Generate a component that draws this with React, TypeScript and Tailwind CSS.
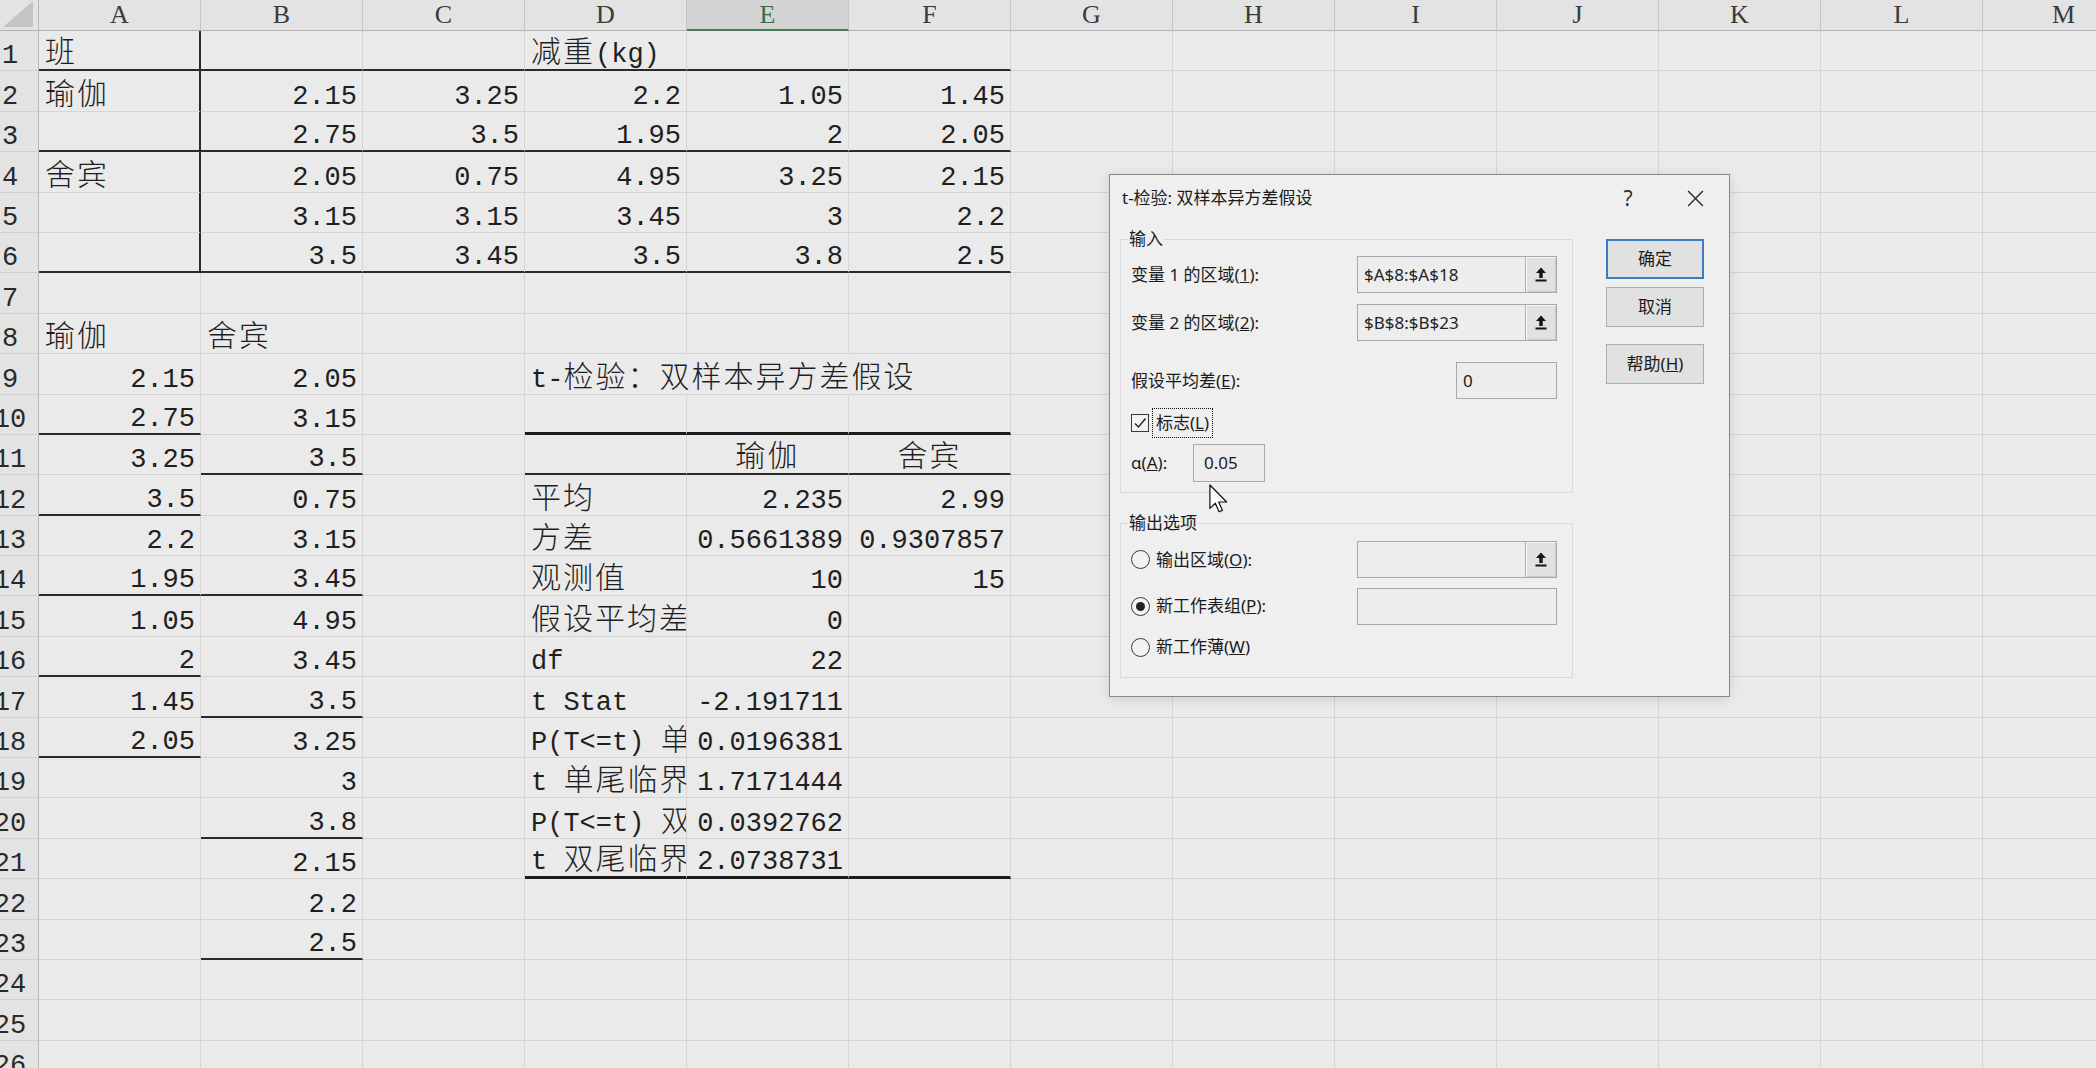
import React from 'react';

type Align = 'l' | 'r' | 'c';
type CellDef = { v: string; a: Align; over?: boolean };

const COLS = ['A', 'B', 'C', 'D', 'E', 'F', 'G', 'H', 'I', 'J', 'K', 'L', 'M'];
const ROW_COUNT = 26;

const data: Record<string, CellDef> = {};
function put(ref: string, v: string | number, a?: Align) {
  if (v === '') return;
  data[ref] = { v: String(v), a: a ?? (typeof v === 'number' ? 'r' : 'l') };
}

// table 1: raw data
const T1: (string | number)[][] = [
  ['班', '', '', '减重(kg)', '', ''],
  ['瑜伽', 2.15, 3.25, 2.2, 1.05, 1.45],
  ['', 2.75, 3.5, 1.95, 2, 2.05],
  ['舍宾', 2.05, 0.75, 4.95, 3.25, 2.15],
  ['', 3.15, 3.15, 3.45, 3, 2.2],
  ['', 3.5, 3.45, 3.5, 3.8, 2.5],
];
T1.forEach((row, i) => row.forEach((v, j) => put(COLS[j] + (i + 1), v)));

// table 2: two columns
put('A8', '瑜伽');
put('B8', '舍宾');
[2.15, 2.75, 3.25, 3.5, 2.2, 1.95, 1.05, 2, 1.45, 2.05].forEach((v, i) => put('A' + (9 + i), v));
[2.05, 3.15, 3.5, 0.75, 3.15, 3.45, 4.95, 3.45, 3.5, 3.25, 3, 3.8, 2.15, 2.2, 2.5].forEach((v, i) =>
  put('B' + (9 + i), v)
);

// table 3: t-test output
data['D9'] = { v: 't-检验：双样本异方差假设', a: 'l', over: true };
put('E11', '瑜伽', 'c');
put('F11', '舍宾', 'c');
const T3: [string, string | number, string | number][] = [
  ['平均', 2.235, 2.99],
  ['方差', 0.5661389, 0.9307857],
  ['观测值', 10, 15],
  ['假设平均差', 0, ''],
  ['df', 22, ''],
  ['t Stat', -2.191711, ''],
  ['P(T<=t) 单尾', 0.0196381, ''],
  ['t 单尾临界', 1.7171444, ''],
  ['P(T<=t) 双尾', 0.0392762, ''],
  ['t 双尾临界', 2.0738731, ''],
];
T3.forEach(([l, e, f], i) => {
  put('D' + (12 + i), l);
  put('E' + (12 + i), e);
  put('F' + (12 + i), f);
});

const thickBottom = new Set(['D10', 'E10', 'F10', 'D21', 'E21', 'F21']);
const lineBottom = new Set<string>(['D11', 'E11', 'F11', 'A10', 'A12', 'A14', 'A16', 'A18', 'B11', 'B14', 'B17', 'B20', 'B23']);
['A', 'B', 'C', 'D', 'E', 'F'].forEach((c) => ['1', '3', '6'].forEach((r) => lineBottom.add(c + r)));
const lineRight = new Set(['A1', 'A2', 'A3', 'A4', 'A5', 'A6']);
const noGridRight = new Set(['D9', 'E9']);

const CJK = /([\u3000-\u303f\u4e00-\u9fff\uff00-\uffef]+)/;

function SheetText({ s }: { s: string }) {
  return (
    <span className="whitespace-pre leading-none font-['Liberation_Mono',monospace] text-[27px] text-[#1f1f1f]">
      {s.split(CJK).map((p, i) =>
        !p ? null : CJK.test(p) ? (
          <span key={i} className="font-['Noto_Sans_CJK_SC',sans-serif] font-light text-[30px] tracking-[2px]">
            {p}
          </span>
        ) : (
          <span key={i}>{p}</span>
        )
      )}
    </span>
  );
}

function Cell({ id }: { id: string }) {
  const d = data[id];
  const bottom = thickBottom.has(id)
    ? 'border-b-[3px] border-b-[#1c1c1c]'
    : lineBottom.has(id)
      ? 'border-b-2 border-b-[#2a2a2a]'
      : 'border-b border-b-[#d4d4d4]';
  const right = lineRight.has(id)
    ? 'border-r-2 border-r-[#2a2a2a]'
    : noGridRight.has(id)
      ? 'border-r border-r-transparent'
      : 'border-r border-r-[#d4d4d4]';
  const align = !d ? '' : d.a === 'r' ? 'justify-end pr-[5px]' : d.a === 'c' ? 'justify-center' : 'justify-start pl-[6px]';
  return (
    <div
      className={`flex items-end min-w-0 ${d?.over ? 'relative z-10 overflow-visible' : 'overflow-hidden'} ${bottom} ${right} ${align}`}
    >
      {d && <SheetText s={d.v} />}
    </div>
  );
}

function ColHead({ c }: { c: string }) {
  const sel = c === 'E';
  return (
    <div
      className={`flex items-center justify-center border-r border-r-[#c6c6c6] font-['Liberation_Serif',serif] text-[26px] leading-none ${
        sel ? 'bg-[#d4d4d4] text-[#3b6b4a] border-b-2 border-b-[#4a7c59]' : 'bg-[#e3e3e3] text-[#3a3a3a] border-b border-b-[#b2b2b2]'
      }`}
    >
      {c}
    </div>
  );
}

function RowHead({ r }: { r: number }) {
  return (
    <div className="flex items-end overflow-hidden bg-[#e3e3e3] border-r border-r-[#b8b8b8] border-b border-b-[#cfcfcf]">
      <div className="w-[60px] -ml-[20px] shrink-0 flex justify-center">
        <span className="leading-none font-['Liberation_Mono',monospace] text-[27px] text-[#2a2a2a]">{r}</span>
      </div>
    </div>
  );
}

function Corner() {
  return (
    <div className="bg-[#e3e3e3] border-r border-r-[#b8b8b8] border-b border-b-[#b2b2b2] overflow-hidden">
      <svg width="38" height="30" viewBox="0 0 38 30">
        <path d="M3 27 L33 1 L33 27 Z" fill="#c4c4c4" />
      </svg>
    </div>
  );
}

function Sheet() {
  return (
    <div className="grid w-[2145px] grid-cols-[39px_repeat(13,162px)] grid-rows-[31px_repeat(26,40.4px)]">
      <Corner />
      {COLS.map((c) => (
        <ColHead key={c} c={c} />
      ))}
      {Array.from({ length: ROW_COUNT }, (_, i) => i + 1).map((r) => (
        <React.Fragment key={r}>
          <RowHead r={r} />
          {COLS.map((c) => (
            <Cell key={c + r} id={c + r} />
          ))}
        </React.Fragment>
      ))}
    </div>
  );
}

function UpArrow() {
  return (
    <svg width="14" height="17" viewBox="0 0 14 17">
      <path d="M7 1.5 L2 7 H5.3 V12 H8.7 V7 H12 Z" fill="#151515" />
      <rect x="1.5" y="13.5" width="11" height="2" fill="#151515" />
    </svg>
  );
}

function RefBox({ value, arrow = true }: { value?: string; arrow?: boolean }) {
  return (
    <div className="flex h-[37px] w-[200px] border border-[#a9a9a9] bg-[#ededed]">
      <div className="flex-1 flex items-center pl-[6px] text-[17px] text-[#222]">{value}</div>
      {arrow && (
        <div className="w-[31px] flex items-center justify-center border-l border-l-[#b0b0b0] bg-[#e1e1e1] shadow-[inset_1px_1px_0_#f6f6f6,inset_-1px_-1px_0_#c9c9c9]">
          <UpArrow />
        </div>
      )}
    </div>
  );
}

function Radio({ on }: { on?: boolean }) {
  return (
    <span className="w-[19px] h-[19px] shrink-0 rounded-full border border-[#3a3a3a] bg-[#f3f3f3] flex items-center justify-center">
      {on && <span className="w-[9px] h-[9px] rounded-full bg-[#222]" />}
    </span>
  );
}

function Btn({ children, primary }: { children: React.ReactNode; primary?: boolean }) {
  return (
    <div
      className={`h-[40px] w-[98px] flex items-center justify-center bg-[#e1e1e1] text-[17px] text-[#1b1b1b] ${
        primary ? 'border-2 border-[#3e79c4]' : 'border border-[#adadad]'
      }`}
    >
      <span>{children}</span>
    </div>
  );
}

function Dialog() {
  return (
    <div className="absolute left-[1109px] top-[174px] w-[621px] h-[523px] flex flex-col bg-[#efefef] border border-[#8a8a8a] shadow-[0_2px_10px_rgba(0,0,0,0.12)] font-['Noto_Sans','Noto_Sans_CJK_SC',sans-serif] text-[#1b1b1b]">
      <div className="h-[46px] flex items-center pl-[12px] pr-[19px]">
        <span className="flex-1 text-[17px]">t-检验: 双样本异方差假设</span>
        <span className="w-[30px] text-center text-[21px] leading-none text-[#333]">?</span>
        <span className="w-[30px] ml-[37px] flex items-center justify-center">
          <svg width="17" height="17" viewBox="0 0 16 16">
            <path d="M1 1 L15 15 M15 1 L1 15" stroke="#2a2a2a" strokeWidth="1.3" />
          </svg>
        </span>
      </div>

      <div className="flex pl-[10px] mt-[18px]">
        <div className="w-[453px] flex flex-col">
          <div className="relative h-[254px] border border-[#d9d9d9] flex flex-col pl-[10px] pr-[15px]">
            <span className="absolute left-[7px] -top-[13px] px-[1px] bg-[#efefef] text-[17px] leading-[24px]">输入</span>
            <div className="mt-[16px] h-[37px] flex items-center justify-between">
              <span className="text-[17px]">
                变量 1 的区域(<u>1</u>):
              </span>
              <RefBox value="$A$8:$A$18" />
            </div>
            <div className="mt-[11px] h-[37px] flex items-center justify-between">
              <span className="text-[17px]">
                变量 2 的区域(<u>2</u>):
              </span>
              <RefBox value="$B$8:$B$23" />
            </div>
            <div className="mt-[21px] h-[37px] flex items-center justify-between">
              <span className="text-[17px]">
                假设平均差(<u>E</u>):
              </span>
              <div className="h-[37px] w-[101px] flex items-center pl-[6px] border border-[#a9a9a9] bg-[#ededed] text-[17px]">0</div>
            </div>
            <div className="mt-[9px] h-[30px] flex items-center">
              <span className="w-[18px] h-[18px] border border-[#3a3a3a] bg-[#f3f3f3] flex items-center justify-center">
                <svg width="14" height="14" viewBox="0 0 14 14">
                  <path d="M2 7.5 L5.5 11 L12.5 2.5" fill="none" stroke="#222" strokeWidth="1.4" />
                </svg>
              </span>
              <span className="ml-[3px] h-[30px] flex items-center px-[3px] border border-dotted border-[#111] text-[17px]">
                <span>
                  标志(<u>L</u>)
                </span>
              </span>
            </div>
            <div className="mt-[6px] h-[38px] flex items-center">
              <span className="w-[62px] text-[17px]">
                α(<u>A</u>):
              </span>
              <div className="h-[38px] w-[72px] flex items-center pl-[10px] border border-[#a9a9a9] bg-[#ededed] text-[17px]">0.05</div>
            </div>
          </div>

          <div className="relative mt-[30px] h-[155px] border border-[#d9d9d9] flex flex-col pl-[10px] pr-[15px]">
            <span className="absolute left-[7px] -top-[13px] px-[1px] bg-[#efefef] text-[17px] leading-[24px]">输出选项</span>
            <div className="mt-[17px] h-[37px] flex items-center justify-between">
              <span className="flex items-center gap-[6px] text-[17px]">
                <Radio />
                <span>
                  输出区域(<u>O</u>):
                </span>
              </span>
              <RefBox />
            </div>
            <div className="mt-[9px] h-[38px] flex items-center justify-between">
              <span className="flex items-center gap-[6px] text-[17px]">
                <Radio on />
                <span>
                  新工作表组(<u>P</u>):
                </span>
              </span>
              <RefBox arrow={false} />
            </div>
            <div className="mt-[7px] h-[30px] flex items-center">
              <span className="flex items-center gap-[6px] text-[17px]">
                <Radio />
                <span>
                  新工作薄(<u>W</u>)
                </span>
              </span>
            </div>
          </div>
        </div>

        <div className="ml-[33px] flex flex-col">
          <Btn primary>确定</Btn>
          <div className="mt-[8px]">
            <Btn>取消</Btn>
          </div>
          <div className="mt-[17px]">
            <Btn>
              帮助(<u>H</u>)
            </Btn>
          </div>
        </div>
      </div>
    </div>
  );
}

function Cursor() {
  return (
    <svg className="absolute left-[1209px] top-[484px]" width="19" height="29" viewBox="0 0 12.5 19">
      <path
        d="M0.6 0.6 V16 L4.2 12.6 L6.6 18.2 L8.8 17.3 L6.4 11.8 H11.6 Z"
        fill="#ffffff"
        stroke="#111"
        strokeWidth="0.8"
        strokeLinejoin="round"
      />
    </svg>
  );
}

export default function App() {
  return (
    <div className="relative w-[2096px] h-[1068px] overflow-hidden bg-[#eaeaea]">
      <Sheet />
      <Dialog />
      <Cursor />
    </div>
  );
}
